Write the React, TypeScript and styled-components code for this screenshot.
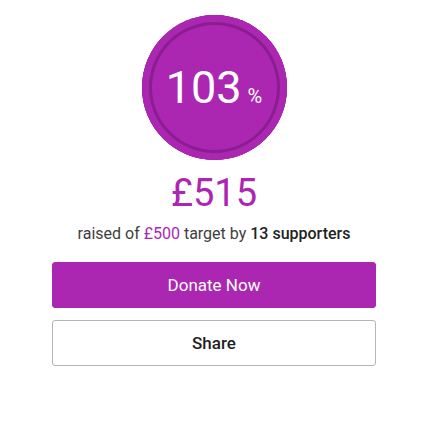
import React from "react";
import styled, { createGlobalStyle } from "styled-components";

const Global = createGlobalStyle`
  html, body { margin: 0; padding: 0; background: #fff; }
  body { font-family: Roboto, "Noto Sans", Arial, sans-serif; }
`;

const PURPLE = "#ab27b2";

const Card = styled.div`
  width: 324px;
  margin-left: 52px;
  padding-top: 15px;
  display: flex;
  flex-direction: column;
  align-items: center;
`;

const Ring = styled.div`
  width: 145px;
  height: 145px;
  border-radius: 50%;
  background: ${PURPLE};
  box-shadow: inset 0 0 0 7px ${PURPLE}, inset 0 0 0 10px #8a1e91;
  display: flex;
  align-items: center;
  justify-content: center;
  color: #fff;
`;

const Percent = styled.span`
  font-size: 45px;
  font-weight: 400;
  line-height: 1;
  display: flex;
  align-items: baseline;
`;

const PercentSign = styled.span`
  font-size: 20px;
  margin-left: 6px;
`;

const Raised = styled.div`
  margin-top: 11px;
  font-size: 38px;
  line-height: 44px;
  color: ${PURPLE};
`;

const Summary = styled.div`
  margin-top: 9px;
  font-size: 16px;
  line-height: 20px;
  color: #3e3e3e;
`;

const Target = styled.span`
  color: ${PURPLE};
`;

const Supporters = styled.span`
  color: #222;
  font-weight: 500;
`;

const Button = styled.button<{ $primary?: boolean }>`
  width: 100%;
  height: 46px;
  box-sizing: border-box;
  border-radius: 3px;
  font-family: Roboto, "Noto Sans", Arial, sans-serif;
  font-size: 17px;
  cursor: pointer;
  display: flex;
  align-items: center;
  justify-content: center;
  background: ${(p) => (p.$primary ? PURPLE : "#fff")};
  color: ${(p) => (p.$primary ? "#fff" : "#1e1e1e")};
  font-weight: ${(p) => (p.$primary ? 400 : 500)};
  border: 1px solid ${(p) => (p.$primary ? PURPLE : "#b5b5b5")};
`;

const Actions = styled.div`
  width: 100%;
  margin-top: 18px;
  display: flex;
  flex-direction: column;
  gap: 12px;
`;

export default function App() {
  return (
    <>
      <Global />
      <Card>
        <Ring>
          <Percent>
            103<PercentSign>%</PercentSign>
          </Percent>
        </Ring>
        <Raised>£515</Raised>
        <Summary>
          raised of <Target>£500</Target> target by{" "}
          <Supporters>13 supporters</Supporters>
        </Summary>
        <Actions>
          <Button $primary>Donate Now</Button>
          <Button>Share</Button>
        </Actions>
      </Card>
    </>
  );
}
